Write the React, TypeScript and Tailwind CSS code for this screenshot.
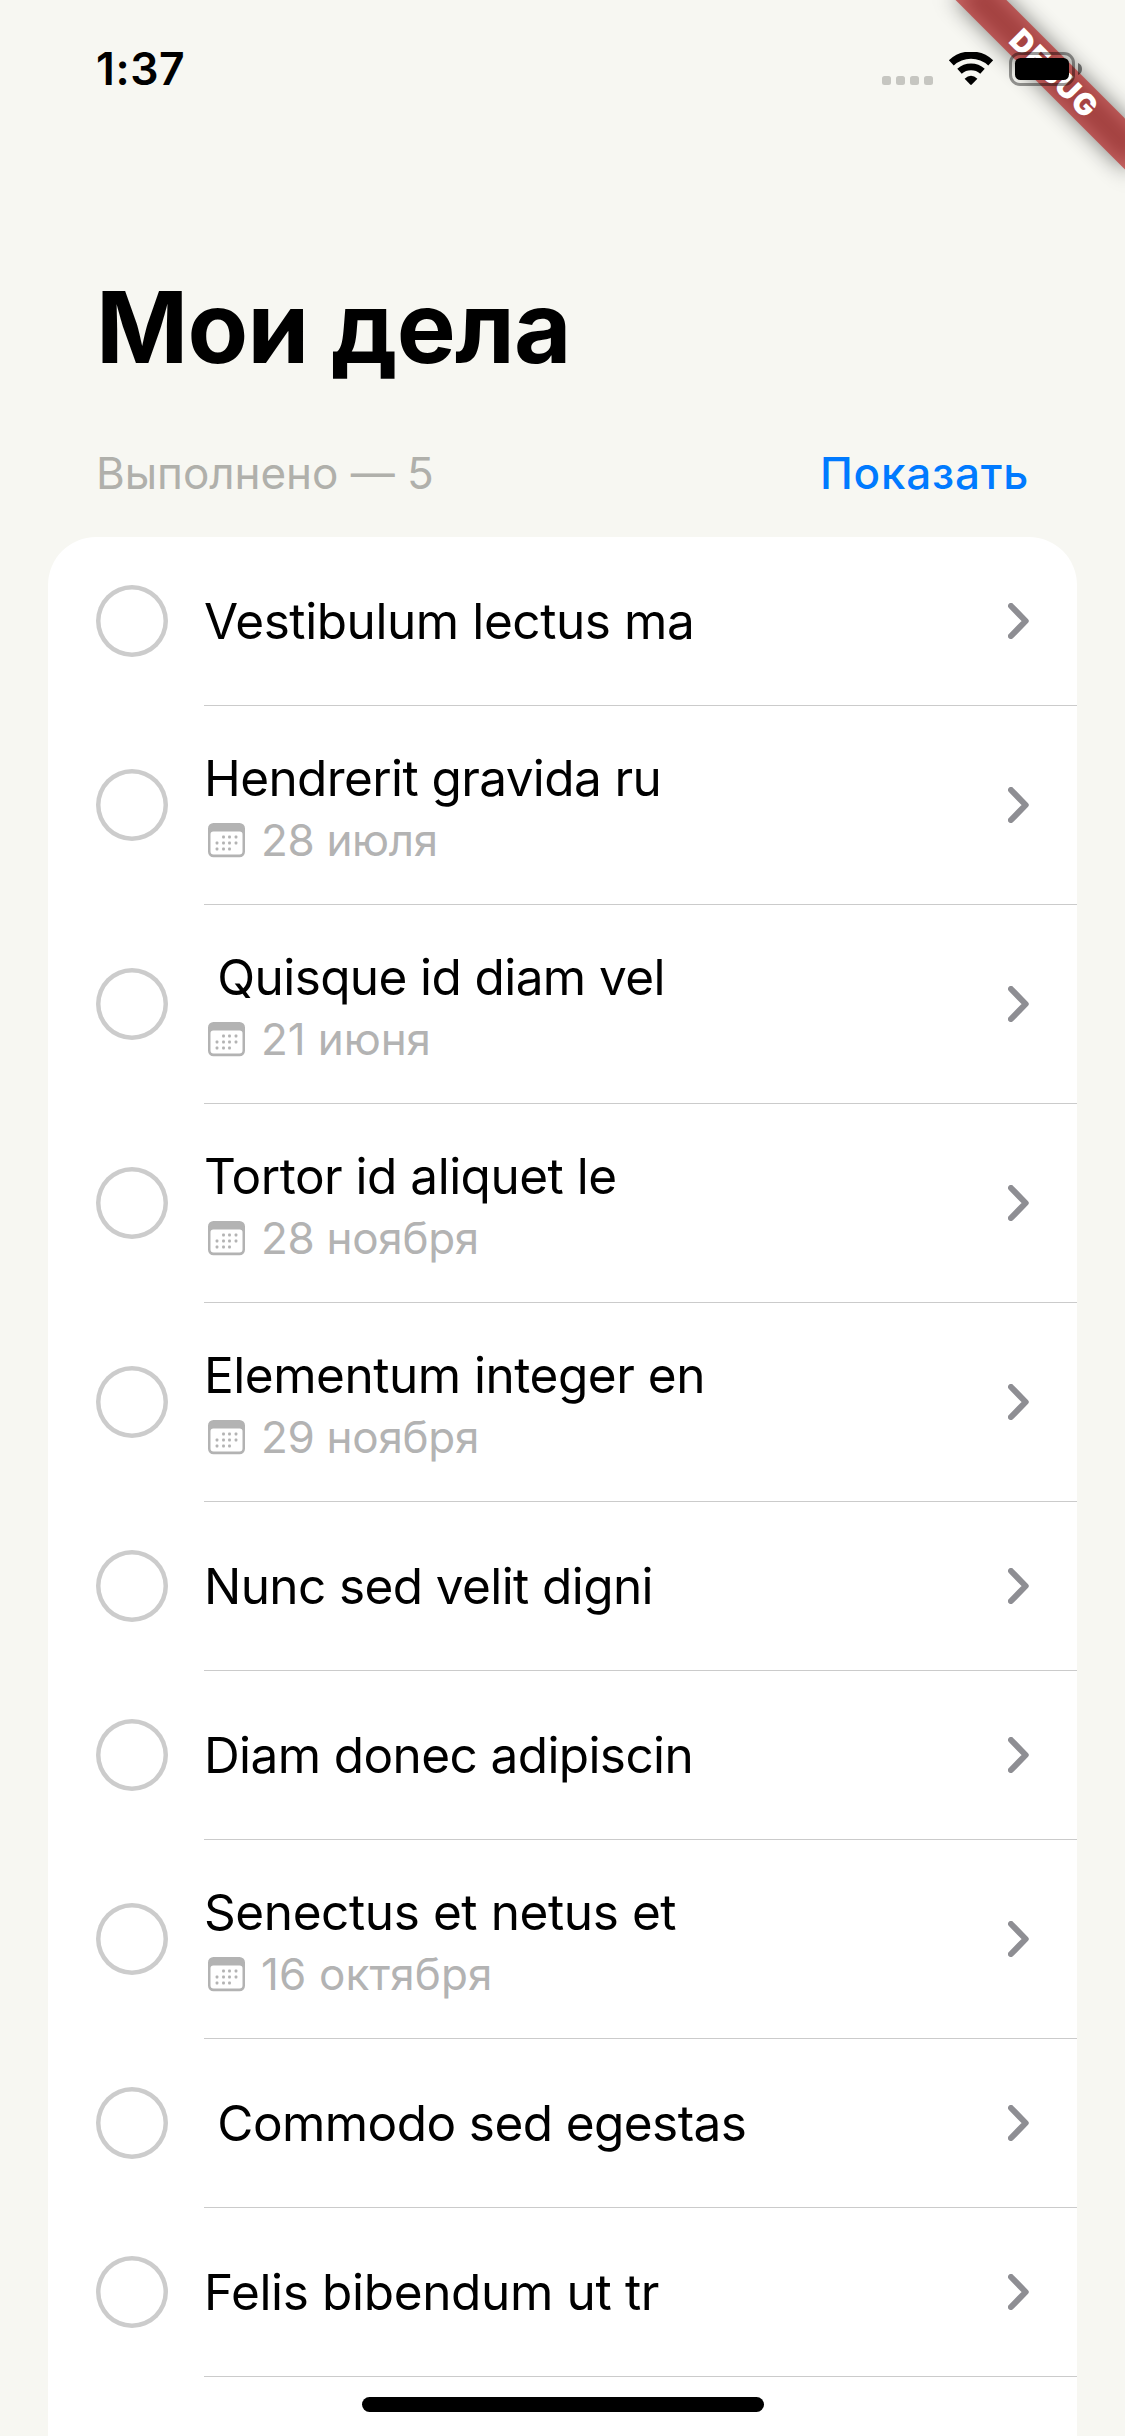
type Task = { title: string; date?: string; tracking: string; dateTracking?: string };

const tasks: Task[] = [
  { title: "Vestibulum lectus ma", tracking: "tracking-[-0.42px]" },
  { title: "Hendrerit gravida ru", date: "28 июля", tracking: "tracking-[-0.6px]", dateTracking: "tracking-[-0.35px]" },
  { title: " Quisque id diam vel", date: "21 июня", tracking: "tracking-[-0.6px]", dateTracking: "tracking-[-0.1px]" },
  { title: "Tortor id aliquet le", date: "28 ноября", tracking: "tracking-[-0.5px]", dateTracking: "tracking-[-0.3px]" },
  { title: "Elementum integer en", date: "29 ноября", tracking: "tracking-[-0.48px]", dateTracking: "tracking-[-0.3px]" },
  { title: "Nunc sed velit digni", tracking: "tracking-[-0.6px]" },
  { title: "Diam donec adipiscin", tracking: "tracking-[-0.6px]" },
  { title: "Senectus et netus et", date: "16 октября", tracking: "tracking-[-0.4px]", dateTracking: "tracking-[0.15px]" },
  { title: " Commodo sed egestas", tracking: "tracking-[-0.58px]" },
  { title: "Felis bibendum ut tr", tracking: "tracking-[-0.34px]" },
];

function CalendarIcon() {
  const dots = [
    [15.5, 14], [21.5, 14], [28, 14],
    [9, 20], [15.5, 20], [21.5, 20], [28, 20],
    [9, 26], [15.5, 26], [21.5, 26],
  ];
  return (
    <svg width="37" height="35" viewBox="0 0 37 35" className="shrink-0" fill="#b3b3b3">
      <path
        fillRule="evenodd"
        d="M5.5 0h26A5.500 5.500 0 0 1 37 5.500v23.300a5.500 5.500 0 0 1-5.500 5.500h-26A5.500 5.500 0 0 1 0 28.800V5.500A5.500 5.500 0 0 1 5.500 0zM5.300 8.400Q2.500 8.400 2.500 11.200v17.300a3 3 0 0 0 3 3h26a3 3 0 0 0 3-3V11.200Q34.500 8.400 31.700 8.400z"
      />
      {dots.map(([x, y]) => (
        <rect key={`${x}-${y}`} x={x - 1.4} y={y - 1.4} width="2.8" height="2.8" rx="0.9" />
      ))}
    </svg>
  );
}

function Chevron() {
  return (
    <svg width="21" height="36" viewBox="0 0 21 36" className="shrink-0" fill="none">
      <path d="M3 3L17.700 18L3 33" stroke="#8e8e93" strokeWidth="6" strokeLinecap="round" strokeLinejoin="round" />
    </svg>
  );
}

function TaskRow({ task }: { task: Task }) {
  return (
    <li className={`flex items-center pl-12 ${task.date ? "h-[199px]" : "h-[169px]"}`}>
      <span className="mb-px size-[72px] shrink-0 rounded-full shadow-[inset_0_0_0_4.5px_#cccccc]" />
      <div className="ml-9 flex h-full grow items-center justify-between border-b border-[#cbcbcb] pr-12">
        <div>
          <p className={`whitespace-pre text-[49.5px] leading-[70px] ${task.tracking}`}>{task.title}</p>
          {task.date && (
            <p className="flex h-[54px] items-center gap-4 pl-1 text-[#b3b3b3]">
              <CalendarIcon />
              <span className={`text-[44px] leading-[54px] ${task.dateTracking}`}>{task.date}</span>
            </p>
          )}
        </div>
        <Chevron />
      </div>
    </li>
  );
}

function DebugBanner() {
  return (
    <div className="pointer-events-none absolute top-0 right-0 size-[260px] overflow-hidden">
      <div className="absolute top-[54px] right-[-48px] h-9 w-60 rotate-45">
        <div className="absolute inset-0 bg-black/50 blur-[11px]" />
        <div className="absolute inset-0 flex items-center justify-center bg-[#b71c1c]/63 pl-1 text-[30px] leading-none font-black tracking-[1.3px] text-white">
          DEBUG
        </div>
      </div>
    </div>
  );
}

function StatusBar() {
  return (
    <header className="relative flex h-[138px] items-center justify-between pr-[43px] pl-24">
      <span className="text-[44.5px] font-semibold tracking-[0.6px]">1:37</span>
      <div className="flex h-[34px] items-center">
        <div className="flex gap-[5px] self-end pb-px">
          {[0, 1, 2, 3].map((n) => (
            <span key={n} className="size-[9px] rounded-[2.5px] bg-[#c6c6c1]" />
          ))}
        </div>
        <svg width="46" height="34" viewBox="0 0 46 34" className="ml-[15px]">
          <path d="M3.300 10.800A29 29 0 0 1 42.700 10.800" fill="none" stroke="#000" strokeWidth="7.2" />
          <path d="M11.500 19.200A17.500 17.500 0 0 1 34.500 19.200" fill="none" stroke="#000" strokeWidth="6.8" />
          <path d="M16.600 26.700Q23 20.600 29.400 26.700L23.800 32.500Q23 33.300 22.200 32.500z" />
        </svg>
        <svg width="73" height="34" viewBox="0 0 73 34" className="ml-[15px]">
          <rect x="1.5" y="1.5" width="63" height="31" rx="9.5" fill="none" stroke="#000" strokeOpacity="0.4" strokeWidth="3" />
          <rect x="6" y="6" width="54" height="22" rx="5.5" />
          <path d="M69 11Q73 12.500 73 17T69 23z" fillOpacity="0.5" />
        </svg>
      </div>
    </header>
  );
}

export default function App() {
  return (
    <div className="relative flex h-[2436px] w-[1125px] flex-col overflow-hidden bg-[#f7f7f2] font-['Inter',sans-serif] text-black">
      <DebugBanner />
      <StatusBar />
      <h1 className="mt-[129px] pl-24 text-[99px] leading-[120px] font-bold tracking-[-0.7px]">Мои дела</h1>
      <div className="mt-[56px] flex h-[60px] items-center justify-between pr-24 pl-24 text-[44px]">
        <span className="tracking-[-0.05px] text-[#b0b0ab]">Выполнено — 5</span>
        <button className="font-medium tracking-[0.8px] text-[#007aff]">Показать</button>
      </div>
      <main className="mx-12 mt-[34px] grow overflow-hidden rounded-t-[48px] bg-white">
        <ul>
          {tasks.map((task) => (
            <TaskRow key={task.title} task={task} />
          ))}
        </ul>
      </main>
      <div className="absolute bottom-6 left-[362px] h-[15px] w-[402px] rounded-full bg-black" />
    </div>
  );
}
